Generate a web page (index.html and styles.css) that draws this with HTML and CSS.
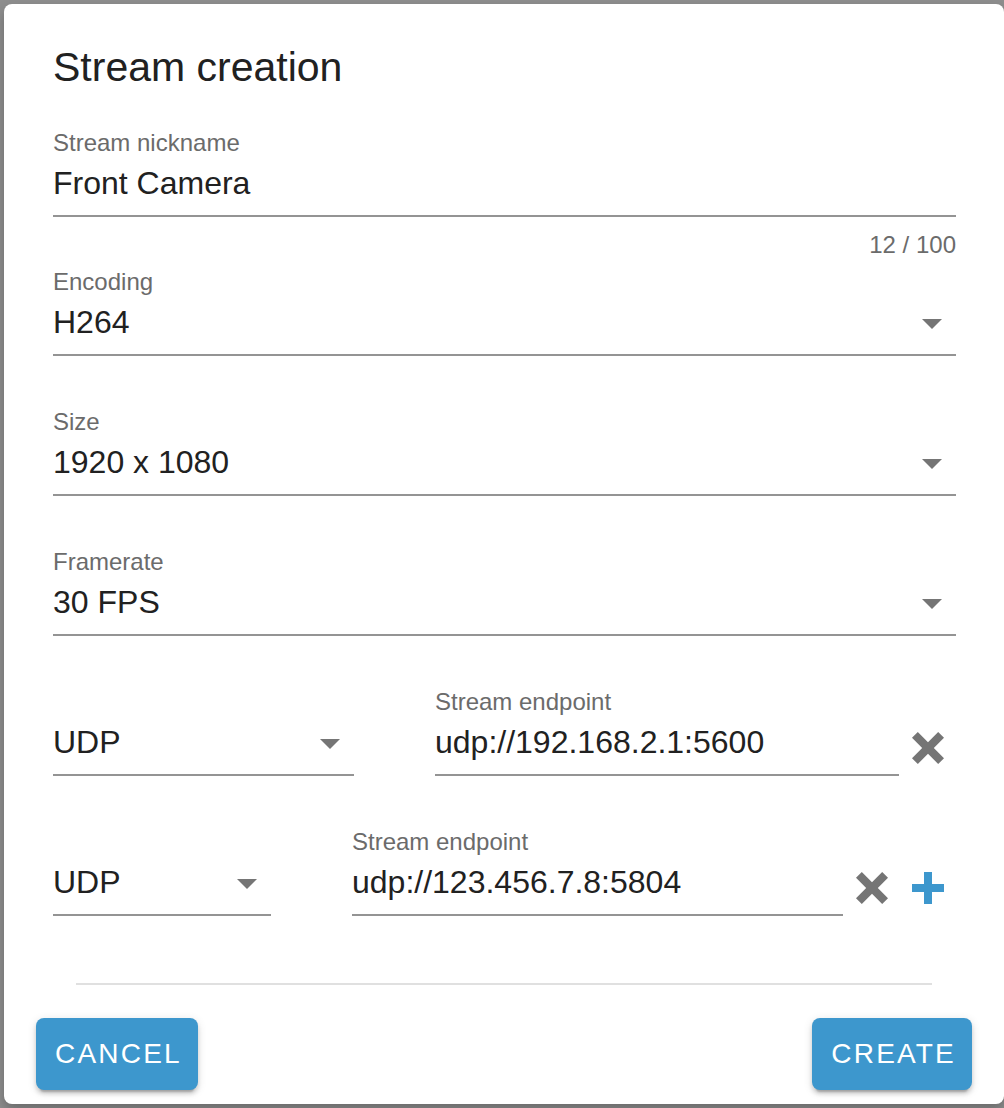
FILE: index.html
```html
<!DOCTYPE html>
<html lang="en">
<head>
<meta charset="utf-8">
<title>Stream creation</title>
<link rel="stylesheet" href="styles.css">
</head>
<body>
<div class="dialog">
  <h1 class="title">Stream creation</h1>
  <div class="form">
    <div class="field">
      <div class="label">Stream nickname</div>
      <div class="control"><span class="value">Front Camera</span></div>
    </div>
    <div class="counter">12 / 100</div>

    <div class="field field-after-counter">
      <div class="label">Encoding</div>
      <div class="control">
        <span class="value">H264</span>
        <svg class="arrow" viewBox="0 0 24 24"><path d="M7 10l5 5 5-5z"/></svg>
      </div>
    </div>

    <div class="field spaced">
      <div class="label">Size</div>
      <div class="control">
        <span class="value">1920 x 1080</span>
        <svg class="arrow" viewBox="0 0 24 24"><path d="M7 10l5 5 5-5z"/></svg>
      </div>
    </div>

    <div class="field spaced">
      <div class="label">Framerate</div>
      <div class="control">
        <span class="value">30 FPS</span>
        <svg class="arrow" viewBox="0 0 24 24"><path d="M7 10l5 5 5-5z"/></svg>
      </div>
    </div>

    <div class="endpoint-row spaced">
      <div class="field protocol protocol-wide">
        <div class="label"></div>
        <div class="control">
          <span class="value">UDP</span>
          <svg class="arrow" viewBox="0 0 24 24"><path d="M7 10l5 5 5-5z"/></svg>
        </div>
      </div>
      <div class="field endpoint">
        <div class="label">Stream endpoint</div>
        <div class="control"><span class="value">udp://192.168.2.1:5600</span></div>
      </div>
      <div class="icons">
        <svg class="icon icon-close" viewBox="0 0 24 24"><path d="M20 6.91L17.09 4L12 9.09L6.91 4L4 6.91L9.09 12L4 17.09L6.91 20L12 14.91L17.09 20L20 17.09L14.91 12L20 6.91Z"/></svg>
      </div>
    </div>

    <div class="endpoint-row spaced">
      <div class="field protocol protocol-narrow">
        <div class="label"></div>
        <div class="control">
          <span class="value">UDP</span>
          <svg class="arrow" viewBox="0 0 24 24"><path d="M7 10l5 5 5-5z"/></svg>
        </div>
      </div>
      <div class="field endpoint">
        <div class="label">Stream endpoint</div>
        <div class="control"><span class="value">udp://123.456.7.8:5804</span></div>
      </div>
      <div class="icons">
        <svg class="icon icon-close" viewBox="0 0 24 24"><path d="M20 6.91L17.09 4L12 9.09L6.91 4L4 6.91L9.09 12L4 17.09L6.91 20L12 14.91L17.09 20L20 17.09L14.91 12L20 6.91Z"/></svg>
        <svg class="icon icon-add" viewBox="0 0 24 24"><path d="M20 14H14V20H10V14H4V10H10V4H14V10H20V14Z"/></svg>
      </div>
    </div>
  </div>

  <hr class="divider">

  <div class="actions">
    <button class="btn">CANCEL</button>
    <button class="btn">CREATE</button>
  </div>
</div>
</body>
</html>
```

FILE: styles.css
```css
html, body {
  margin: 0;
  padding: 0;
}

body {
  width: 1004px;
  height: 1108px;
  overflow: hidden;
  background: #8e8e8e;
  font-family: "Liberation Sans", Arial, Helvetica, sans-serif;
  color: #212121;
}

.dialog {
  box-sizing: border-box;
  width: 1000px;
  height: 1100px;
  margin: 4px 0 0 4px;
  background: #ffffff;
  border-radius: 8px;
  box-shadow: 0 6px 12px rgba(0, 0, 0, 0.25);
  padding: 39px 0 14px 0;
  display: flex;
  flex-direction: column;
}

.title {
  margin: 0 48px 0 49px;
  font-size: 41px;
  line-height: 48px;
  font-weight: 400;
  color: #212121;
}

.form {
  margin: 40px 48px 0 49px;
  display: flex;
  flex-direction: column;
}

.field {
  display: flex;
  flex-direction: column;
}

.field.spaced,
.endpoint-row.spaced {
  margin-top: 54px;
}

.field.field-after-counter {
  margin-top: 13px;
}

.label {
  height: 24px;
  font-size: 24px;
  line-height: 24px;
  color: #6b6b6b;
  margin-bottom: 8px;
  white-space: nowrap;
}

.control {
  display: flex;
  align-items: center;
  height: 40px;
  padding-bottom: 12px;
  border-bottom: 2px solid #949494;
}

.value {
  flex: 1;
  font-size: 32px;
  line-height: 40px;
  color: #212121;
  white-space: nowrap;
}

.arrow {
  width: 48px;
  height: 48px;
  margin: -3px 0 -5px 0;
  fill: #757575;
  flex: none;
}

.counter {
  margin-top: 16px;
  align-self: flex-end;
  font-size: 24px;
  line-height: 24px;
  color: #6b6b6b;
}

.endpoint-row {
  display: flex;
  align-items: flex-end;
  padding-right: 4px;
}

.protocol {
  flex: none;
}

.protocol-wide {
  width: 301px;
}

.protocol-narrow {
  width: 218px;
}

.endpoint {
  flex: 1;
  margin-left: 81px;
  min-width: 0;
}

.icons {
  display: flex;
  gap: 8px;
  margin-left: 5px;
  margin-bottom: 4px;
}

.icon {
  width: 48px;
  height: 48px;
  display: block;
}

.icon-close {
  fill: #757575;
}

.icon-add {
  fill: #3d97cd;
}

.divider {
  margin: 67px 72px 0 72px;
  border: none;
  height: 2px;
  background: #e0e0e0;
}

.actions {
  margin-top: 33px;
  padding: 0 32px;
  display: flex;
  justify-content: space-between;
}

.btn {
  height: 72px;
  padding: 0 16px 0 19px;
  border: none;
  border-radius: 8px;
  background: #3d97cd;
  color: #ffffff;
  font-family: "Liberation Sans", Arial, Helvetica, sans-serif;
  font-size: 28px;
  font-weight: 400;
  letter-spacing: 2.2px;
  box-shadow: 0 6px 2px -4px rgba(0, 0, 0, 0.2), 0 4px 4px 0 rgba(0, 0, 0, 0.14), 0 2px 10px 0 rgba(0, 0, 0, 0.12);
}
```
